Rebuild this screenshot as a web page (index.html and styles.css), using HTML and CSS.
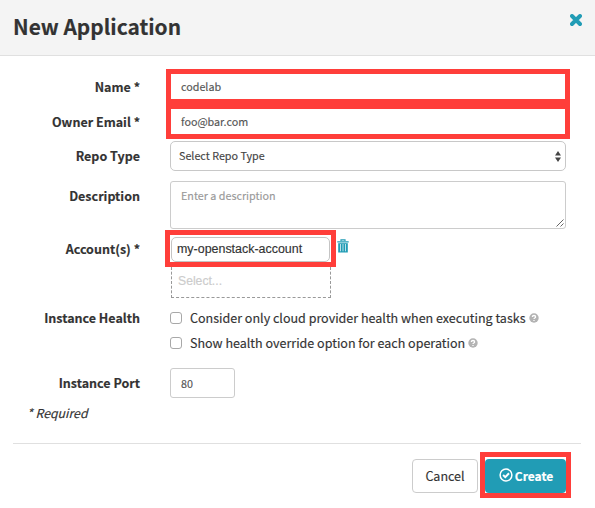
FILE: index.html
```html
<!DOCTYPE html>
<html lang="en">
<head>
<meta charset="utf-8">
<title>New Application</title>
<link rel="stylesheet" href="styles.css">
</head>
<body>
<form class="modal">
  <header class="modal-header">
    <h1 class="title">New Application</h1>
    <svg class="close" viewBox="0 0 12 12"><path d="M2 2L10 10M10 2L2 10" stroke="currentColor" stroke-width="3.9" stroke-linecap="round"/></svg>
  </header>
  <main class="modal-body">
    <div class="row row-name"><span class="label">Name *</span><div class="highlight wide"><span class="value">codelab</span></div></div>
    <div class="row row-email"><span class="label">Owner Email *</span><div class="highlight wide"><span class="value">foo@bar.com</span></div></div>
    <div class="row row-repo"><span class="label">Repo Type</span><div class="select"><span class="select-text">Select Repo Type</span><svg class="arrows" width="6" height="11" viewBox="0 0 6 11"><path d="M3 0L6 4.6H0zM3 11L6 6.4H0z" fill="#444"/></svg></div></div>
    <div class="row row-desc"><span class="label">Description</span><div class="textarea"><span class="placeholder">Enter a description</span><svg class="grip" width="8" height="8" viewBox="0 0 8 8"><path d="M.5 7.5L7.5 .5M4.5 7.5L7.5 4.5" stroke="#666" fill="none"/></svg></div></div>
    <div class="row row-account"><span class="label">Account(s) *</span>
      <div class="accounts">
        <div class="account-line">
          <div class="highlight account"><div class="account-box"><span class="account-text">my-openstack-account</span></div></div>
          <svg class="trash" width="12" height="14" viewBox="0 0 12 14"><path d="M4 2V.8h4V2M.3 2.8h11.4" fill="none" stroke="currentColor" stroke-width="1.2"/><path d="M1.2 4.2h9.6v9.3H1.2z" fill="currentColor"/><path d="M3.5 5v7.3M6 5v7.3M8.5 5v7.3" stroke="#fff" stroke-width=".7"/></svg>
        </div>
        <div class="dashed"><span class="dashed-text">Select...</span></div>
      </div>
    </div>
    <div class="row row-health"><span class="label">Instance Health</span>
      <div class="checks">
        <div class="check"><i class="box"></i><span class="check-text">Consider only cloud provider health when executing tasks</span><svg class="help" viewBox="0 0 10 10"><circle cx="5" cy="5" r="4.7" fill="#b3b3b3"/><path d="M3.3 4Q3.4 2.5 5 2.5T6.6 3.9Q6.6 4.6 5.7 5Q5 5.3 5 6.1M5 6.9v1.2" stroke="#fff" stroke-width="1.3" fill="none"/></svg></div>
        <div class="check"><i class="box"></i><span class="check-text">Show health override option for each operation</span><svg class="help" viewBox="0 0 10 10"><circle cx="5" cy="5" r="4.7" fill="#b3b3b3"/><path d="M3.3 4Q3.4 2.5 5 2.5T6.6 3.9Q6.6 4.6 5.7 5Q5 5.3 5 6.1M5 6.9v1.2" stroke="#fff" stroke-width="1.3" fill="none"/></svg></div>
      </div>
    </div>
    <div class="row row-port"><span class="label">Instance Port</span><div class="port"><span class="value">80</span></div></div>
    <p class="required">* Required</p>
  </main>
  <footer class="modal-footer">
    <div class="cancel"><span class="cancel-text">Cancel</span></div>
    <div class="highlight create-frame"><div class="create"><svg width="14" height="14" viewBox="0 0 14 14"><circle cx="7" cy="7" r="5.9" fill="none" stroke="#fff" stroke-width="1.5"/><path d="M4.1 7L6.3 9.1L10 5.2" fill="none" stroke="#fff" stroke-width="2"/></svg><span class="create-text">Create</span></div></div>
  </footer>
</form>
</body>
</html>
```
FILE: styles.css
```css
* { box-sizing: border-box; }
body {
  margin: 0;
  background: #fff;
  color: #333;
  font-family: "Noto Sans CJK SC", "Noto Sans", sans-serif;
  font-size: 12.5px;
  line-height: 20px;
  overflow: hidden;
  -webkit-text-stroke: .15px;
}
span { white-space: nowrap; }
svg { display: block; flex: none; }
.modal { height: 508px; }
.modal-header {
  display: flex;
  justify-content: space-between;
  height: 56px;
  padding: 0 13px;
  background: #f4f4f4;
  border-bottom: 1px solid #e0e0e0;
}
.title { margin: 10px 0 0; font-size: 20.9px; line-height: 32px; font-weight: 700; }
.close { width: 12px; height: 12px; margin-top: 14px; color: #219cb5; }
.modal-body { height: 387px; padding-top: 13px; }
.row { display: flex; align-items: flex-start; }
.label { width: 140px; font-weight: 700; text-align: right; }
.highlight { border: 5px solid #ff3e3a; background: #fff; }
.wide { width: 404px; height: 35px; margin-left: 26px; padding: 3px 10px 0; }
.value { display: block; font-size: 10.75px; color: #555; }
.row-name, .row-email { height: 35px; }
.row-name .label, .row-email .label { padding-top: 8px; }
.row-repo { height: 42px; padding-top: 2px; }
.row-repo .label { padding-top: 5px; }
.select {
  display: flex;
  justify-content: space-between;
  width: 396px;
  height: 30px;
  margin-left: 30px;
  padding: 4px 4px 0 8px;
  border: 1px solid #c8c8c8;
  border-radius: 5px;
}
.select-text { font-size: 10.75px; color: #444; }
.arrows { margin-top: 5px; }
.row-desc { height: 49px; }
.row-desc .label { padding-top: 5px; }
.textarea {
  display: flex;
  justify-content: space-between;
  width: 396px;
  height: 48px;
  margin-left: 30px;
  padding: 4px 1px 1px 10px;
  border: 1px solid #ccc;
  border-radius: 3px;
}
.placeholder { font-size: 10.75px; color: #999; }
.grip { align-self: flex-end; }
.row-account { height: 78px; }
.row-account .label { padding-top: 9px; }
.accounts { margin-left: 25px; }
.account-line { display: flex; }
.account { width: 171px; height: 37px; padding: 2px 1px 0; }
.account-box { width: 159px; height: 25px; padding: 1px 5px; border: 1px solid #c4c4c4; border-radius: 5px; }
.account-text, .dashed-text { display: block; font-family: "Liberation Sans", sans-serif; font-size: 12.45px; }
.trash { margin: 9px 0 0 1px; color: #219cb5; }
.dashed { width: 160px; height: 31px; margin-left: 6px; padding: 4px 6px; border: 1px dashed #999; border-top: 0; }
.dashed-text { font-size: 12.2px; color: #ccc; }
.row-health { height: 60px; }
.checks { margin-left: 30px; }
.check { display: flex; height: 25px; }
.box { width: 12px; height: 12px; margin-top: 4px; border: 1px solid #a8a8a8; border-radius: 3px; }
.check-text { margin-left: 8px; font-size: 12.53px; }
.help { width: 10px; height: 10px; margin: 5px 0 0 3px; }
.row-port { height: 35px; }
.row-port .label { padding-top: 5px; }
.port { width: 65px; height: 30px; margin-left: 30px; padding: 5px 10px; border: 1px solid #ccc; border-radius: 3px; }
.required { margin: 0 0 0 27px; font-size: 12.3px; font-style: italic; }
.modal-footer {
  display: flex;
  justify-content: flex-end;
  height: 60px;
  margin: 0 14px 0 13px;
  padding: 8px 10px 0 0;
  border-top: 1px solid #e0e0e0;
}
.cancel { width: 66px; height: 34px; margin: 7px 2px 0 0; border: 1px solid #ccc; border-radius: 4px; padding-top: 6px; text-align: center; }
.create-frame { width: 91px; height: 46px; padding-top: 2px; }
.create { display: flex; justify-content: center; gap: 2px; height: 34px; padding: 9px 0 0 1px; border-radius: 4px; background: #219cb5; color: #fff; }
.create-text { font-size: 12px; font-weight: 700; line-height: 15px; }
```
